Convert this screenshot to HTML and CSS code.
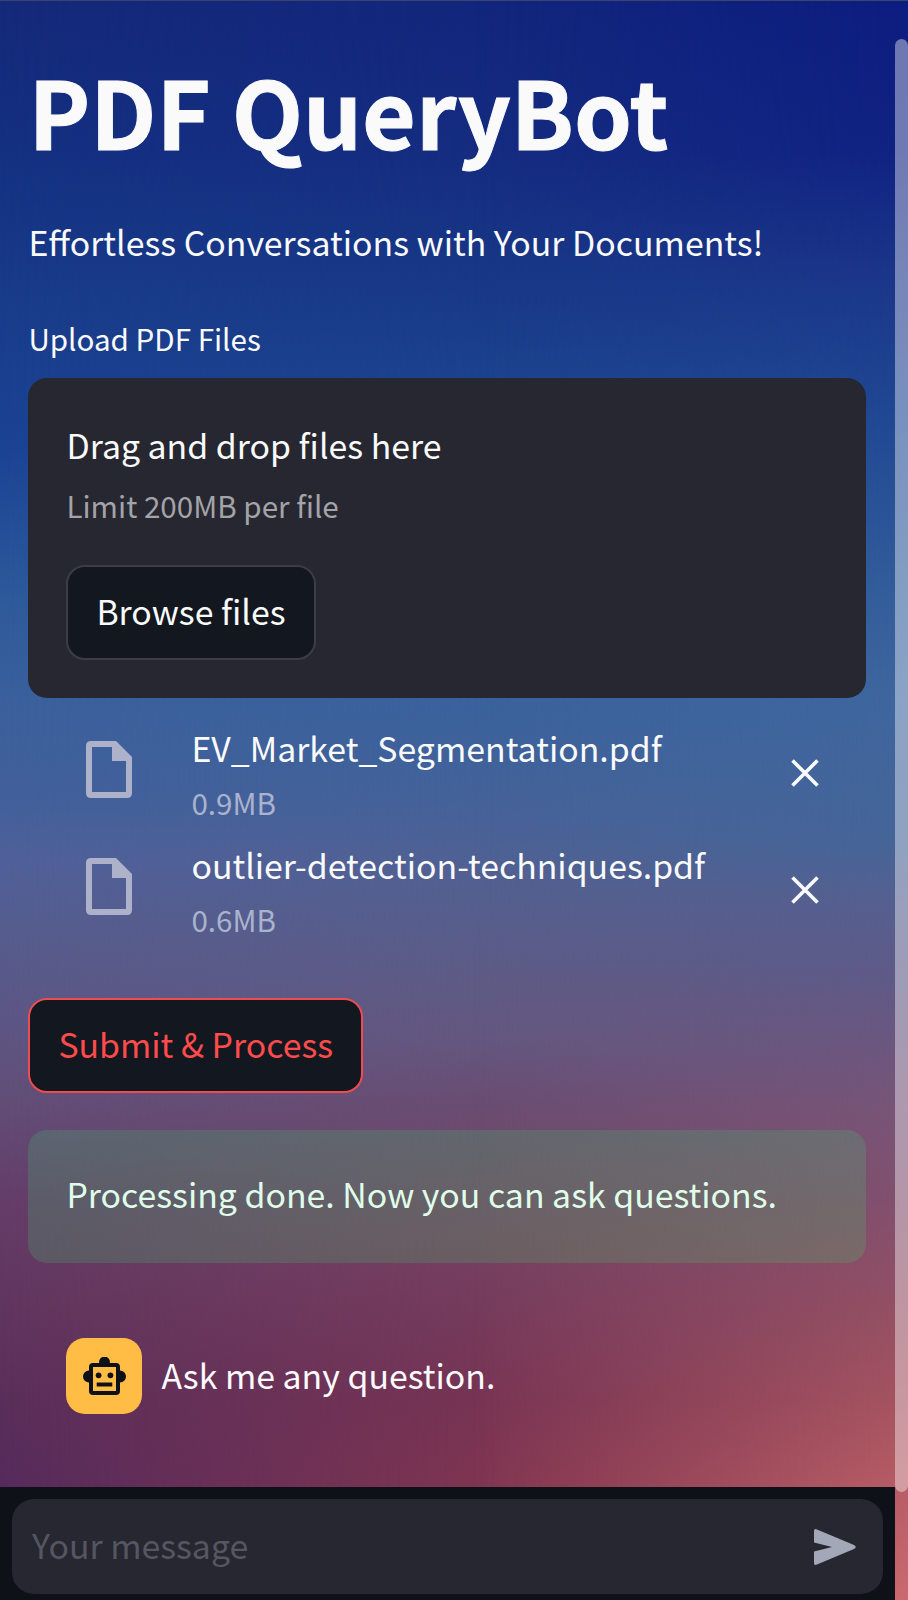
FILE: index.html
```
<!DOCTYPE html>
<html lang="en">
<head>
<meta charset="utf-8">
<title>PDF QueryBot</title>
<link rel="stylesheet" href="styles.css">
</head>
<body>
<div class="app">
  <div class="backdrop backdrop-mid"></div>
  <div class="backdrop backdrop-right"></div>
  <main class="content">
    <h1 class="title">PDF QueryBot</h1>
    <p class="subtitle">Effortless Conversations with Your Documents!</p>
    <div class="label">Upload PDF Files</div>
    <section class="dropzone">
      <div class="drop-title">Drag and drop files here</div>
      <div class="drop-limit">Limit 200MB per file</div>
      <button class="btn">Browse files</button>
    </section>
    <ul class="files">
      <li class="file">
        <svg class="file-icon" viewBox="0 0 46 57"><path fill-rule="evenodd" d="M5 0H30L46 16V52Q46 57 41 57H5Q0 57 0 52V5Q0 0 5 0ZM6 6V51H40V20H26V6Z"/></svg>
        <div class="file-info"><div class="file-name">EV_Market_Segmentation.pdf</div><div class="file-size">0.9MB</div></div>
        <svg class="close" viewBox="0 0 28 28"><path d="M1.5 1.5L26.5 26.5M26.5 1.5L1.5 26.5"/></svg>
      </li>
      <li class="file">
        <svg class="file-icon" viewBox="0 0 46 57"><path fill-rule="evenodd" d="M5 0H30L46 16V52Q46 57 41 57H5Q0 57 0 52V5Q0 0 5 0ZM6 6V51H40V20H26V6Z"/></svg>
        <div class="file-info"><div class="file-name">outlier-detection-techniques.pdf</div><div class="file-size">0.6MB</div></div>
        <svg class="close" viewBox="0 0 28 28"><path d="M1.5 1.5L26.5 26.5M26.5 1.5L1.5 26.5"/></svg>
      </li>
    </ul>
    <button class="btn btn-submit">Submit &amp; Process</button>
    <div class="alert">Processing done. Now you can ask questions.</div>
    <div class="message">
      <div class="avatar">
        <svg class="bot" viewBox="0 0 43 38"><path fill-rule="evenodd" d="M16.200 6A5.400 5.400 0 1 1 26.800 6H33Q37 6 37 10V13.500A6 6 0 0 1 37 25.500V34Q37 38 33 38H10Q6 38 6 34V25.500A6 6 0 0 1 6 13.500V10Q6 6 10 6ZM10 10V34H33V10Z"/><circle cx="15.6" cy="18.3" r="2.9"/><circle cx="27.4" cy="18.3" r="2.9"/><path d="M13.700 25.500H29.300V29.500H13.700Z"/></svg>
      </div>
      <div class="message-text">Ask me any question.</div>
    </div>
  </main>
  <footer class="chatbar">
    <div class="chat-input">
      <span class="placeholder">Your message</span>
      <svg class="send" viewBox="0 0 42 36"><path d="M0 2Q0 -.8 3 .4L40 16Q43.500 18 40 20L3 35.600Q0 36.800 0 34V22.500L18 18L0 13.500Z"/></svg>
    </div>
  </footer>
  <div class="scrollbar"></div>
</div>
</body>
</html>
```
FILE: styles.css
```
* { box-sizing: border-box; margin: 0; padding: 0; }
body { width: 908px; height: 1600px; overflow: hidden; }
.app {
  position: relative;
  display: flex;
  flex-direction: column;
  width: 908px;
  height: 1600px;
  border-top: 1px solid #3a456f;
  font-family: "Noto Sans CJK SC", "Noto Sans", sans-serif;
  font-size: 33.85px;
  line-height: 60px;
  color: #fafafa;
  white-space: nowrap;
  background: linear-gradient(180deg, #15297a 0, #143081 150px, #193c8a 300px, #1b4394 450px, #2e5a9b 600px, #3b609c 700px, #42609b 800px, #50609a 860px, #565c8c 940px, #5c5685 1020px, #624e77 1100px, #643d69 1200px, #61365f 1300px, #5a2e5a 1400px, #562b5c 1487px, #562b5c 1600px);
}
.backdrop { position: absolute; inset: 0; }
.backdrop-mid {
  background: linear-gradient(180deg, #12267c 0, #152c80 150px, #193a88 300px, #1d4590 400px, #30599a 600px, #3a629c 700px, #446299 800px, #506193 860px, #5c5c87 960px, #64577f 1040px, #6a4d72 1100px, #774262 1230px, #763a5b 1320px, #783453 1400px, #803550 1487px, #803550 1600px);
  -webkit-mask-image: linear-gradient(90deg, transparent, #000 55%);
  mask-image: linear-gradient(90deg, transparent, #000 55%);
}
.backdrop-right {
  background: linear-gradient(180deg, #0c1d80 0, #102282 150px, #1b3589 270px, #1f4692 400px, #345e9b 600px, #3f669e 700px, #456598 840px, #556090 900px, #5e5a88 970px, #6b577f 1040px, #775579 1100px, #82506e 1200px, #935064 1300px, #a65460 1400px, #b85d66 1487px, #cb6a70 1600px);
  -webkit-mask-image: linear-gradient(90deg, transparent 52%, #000);
  mask-image: linear-gradient(90deg, transparent 52%, #000);
}
.content { position: relative; display: flex; flex-direction: column; align-items: flex-start; width: 895px; height: 1486px; padding: 54px 29px 0 28.400px; }
.title { font-size: 92.7px; line-height: 110px; font-weight: 700; -webkit-text-stroke: 1px #fafafa; }
.subtitle { margin-top: 47px; }
.label { margin-top: 45px; font-size: 29.6px; line-height: 44px; }
.dropzone { width: 100%; height: 320px; margin-top: 17px; padding: 37px 38px; border-radius: 19px; background: #262730; }
.drop-limit { font-size: 29.6px; line-height: 44px; margin-top: 9px; color: #a3a3a8; }
.btn {
  display: block;
  height: 95px;
  margin-top: 37px;
  padding: 0 28px 4px;
  border: 2px solid #3c3d46;
  border-radius: 19px;
  background: #13171f;
  font: inherit;
  color: #fafafa;
}
.files { width: 100%; padding-top: 18px; list-style: none; }
.file { display: flex; align-items: flex-start; height: 117px; padding: 0 47px 0 58px; }
.file-icon { width: 46px; height: 57px; margin-top: 25px; fill: #adb1c9; }
.file-info { flex: 1; margin: 2px 0 0 59px; }
.file-size { margin-top: 3px; font-size: 29.6px; line-height: 44px; color: #aab3cd; }
.close { width: 28px; height: 28px; margin-top: 43px; fill: none; stroke: #fafafa; stroke-width: 3.6; }
.btn-submit { margin-top: 48px; border-color: #ef4c50; color: #ff4b4b; }
.alert { width: 100%; height: 133px; margin-top: 37px; padding: 34px 38px; border-radius: 19px; background: rgba(61, 213, 109, .2); color: #dffde9; }
.message { display: flex; gap: 19px; margin-top: 75px; padding-left: 38px; }
.avatar { display: flex; align-items: center; justify-content: center; width: 76px; height: 76px; border-radius: 19px; background: #ffbd45; }
.bot { width: 43px; height: 38px; fill: #0e1117; }
.message-text { margin-top: 7px; }
.chatbar { position: relative; width: 895px; height: 113px; padding: 12px 12px 6px 12px; background: #0e1117; }
.chat-input { display: flex; align-items: center; justify-content: space-between; height: 95px; padding: 0 27px 0 20px; border-radius: 22px; background: #262730; color: #555661; }
.placeholder { padding-bottom: 4px; }
.send { width: 42px; height: 36px; fill: #a3a8b8; }
.scrollbar { position: absolute; right: 0; top: 38px; width: 13px; height: 1453px; border-radius: 7px; background: rgba(255, 255, 255, .4); }
```
